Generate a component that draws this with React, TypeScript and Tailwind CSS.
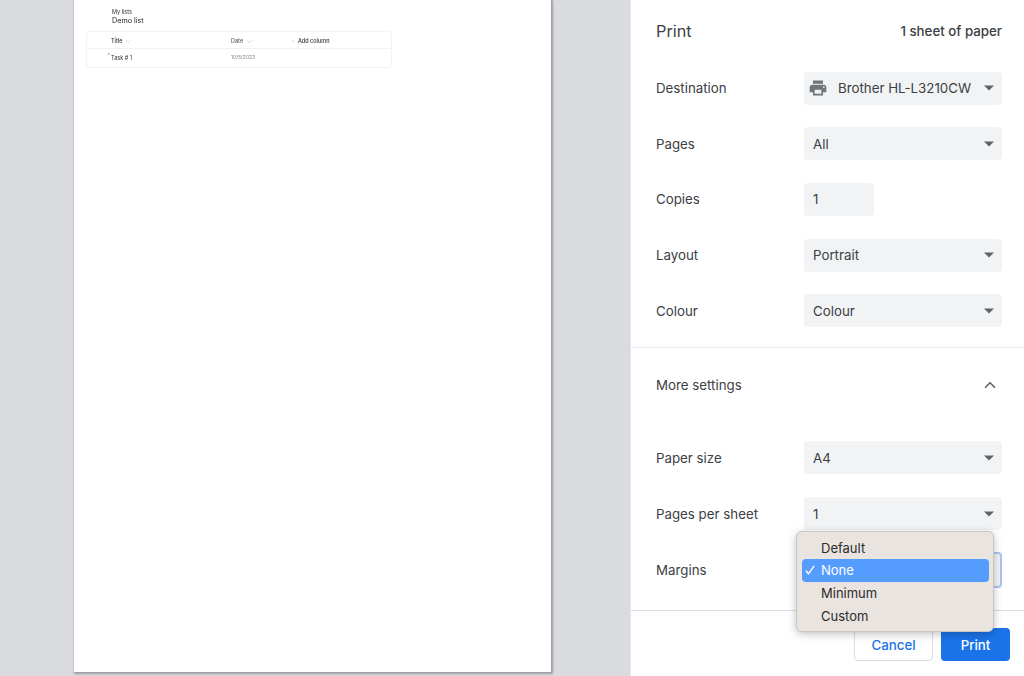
import { ChevronDown, ChevronUp, Plus } from 'lucide-react';

const FONT = "font-['Inter','Liberation_Sans',sans-serif]";

function Caret() {
  return (
    <svg width="10" height="6" viewBox="0 0 10 6" className="shrink-0">
      <path d="M0 0.5h10L5 5.5z" fill="#5f6368" />
    </svg>
  );
}

function PrinterIcon() {
  return (
    <svg width="20" height="20" viewBox="0 0 24 24" className="shrink-0" fill="#70757a">
      <path d="M19 8H5c-1.66 0-3 1.34-3 3v6h4v4h12v-4h4v-6c0-1.66-1.34-3-3-3zm-3 11H8v-5h8v5zm3-7c-.55 0-1-.45-1-1s.45-1 1-1 1 .45 1 1-.45 1-1 1zm-1-9H6v4h12V3z" />
    </svg>
  );
}

function Row({ label, children }: { label: string; children?: React.ReactNode }) {
  return (
    <div className="flex items-center h-[33px] pl-[25px] pr-[22px]">
      <span className="w-[148px] shrink-0 pt-[1.5px] text-[13.3px] text-[#3c4043]">{label}</span>
      {children}
    </div>
  );
}

function Select({ value, icon }: { value?: string; icon?: boolean }) {
  return (
    <div className={`flex items-center w-[198px] h-[33px] rounded-[4px] bg-[#f1f3f4] pr-[8px] text-[13.3px] text-[#3c4043] ${icon ? 'pl-[4px]' : 'pl-[9px]'}`}>
      {icon && <span className="mr-[10px] flex"><PrinterIcon /></span>}
      <span className="flex-1 whitespace-nowrap overflow-hidden pt-[1.5px]">{value}</span>
      <Caret />
    </div>
  );
}

function Sheet() {
  return (
    <div className="ml-[74px] w-[477px] h-[672px] bg-white shadow-[1px_1px_2px_1px_rgba(0,0,0,0.28)]">
      <div className="blur-[0.3px]">
        <div className="pl-[38px] pt-[9px]">
          <div className="text-[5.5px] leading-[6px] text-[#323130]">My lists</div>
          <div className="mt-[1px] text-[7.2px] leading-[10px] text-[#201f1e]">Demo list</div>
        </div>
        <div className="ml-[13px] mt-[6px] w-[304px] h-[35px] rounded-[2px] bg-white shadow-[0_0_2px_rgba(0,0,0,0.18)] text-[5.5px]">
          <div className="flex items-center h-[17px] pt-[2px] border-b border-[#f3f2f1] font-medium text-[#323130]">
            <span className="flex items-center w-[144px] pl-[24px] gap-[2px]">
              Title <ChevronDown size={9} strokeWidth={0.8} color="#8a8886" />
            </span>
            <span className="flex items-center w-[60px] gap-[2px] text-[#605e5c]">
              Date <ChevronDown size={9} strokeWidth={0.8} color="#8a8886" />
            </span>
            <span className="flex items-center gap-[3px]">
              <Plus size={4} strokeWidth={1} color="#8a8886" /> Add column
            </span>
          </div>
          <div className="flex items-center h-[17px] pt-[1px] text-[#323130]">
            <span className="relative w-[144px] pl-[24px]">
              <span className="absolute left-[20px] top-[-2px] text-[4px] text-[#8a8886]">↗</span>
              Task # 1
            </span>
            <span className="text-[#8a8886] text-[5px]">10/5/2023</span>
          </div>
        </div>
      </div>
    </div>
  );
}

function MarginsMenu() {
  const items = ['Default', 'None', 'Minimum', 'Custom'];
  return (
    <div className="absolute left-[165px] top-[531px] w-[198px] h-[101px] rounded-[6px] border border-[#c9c5c1] bg-[#e9e4e0] pl-[5px] pr-[4px] pt-[4px] shadow-[0_2px_8px_rgba(0,0,0,0.25)]">
      {items.map((item) =>
        item === 'None' ? (
          <div key={item} className="relative flex items-center h-[22.8px] rounded-[4px] bg-[#559cff] pl-[19px] pt-[1px] text-[13px] text-white">
            <svg width="10" height="10" viewBox="0 0 10 10" className="absolute left-[3px] top-[6.5px]">
              <path d="M0.8 5.6L3.4 8.8L9.2 0.8" fill="none" stroke="#fff" strokeWidth="1.4" />
            </svg>
            {item}
          </div>
        ) : (
          <div key={item} className="flex items-center h-[22.8px] pl-[19px] pt-[2px] text-[13px] text-[#2d2b29]">
            {item}
          </div>
        ),
      )}
    </div>
  );
}

export default function App() {
  return (
    <div className={`flex w-[1024px] h-[676px] overflow-hidden bg-[#dadbdf] ${FONT}`}>
      <div className="w-[630px] shrink-0">
        <Sheet />
      </div>

      {/* Settings panel */}
      <div className="relative flex flex-col w-[394px] h-full bg-white border-l border-[#e6e7ec]">
        <div className="flex items-center justify-between h-[33px] mt-[15px] pl-[25px] pr-[22px]">
          <span className="text-[16.3px] text-[#3c4043]">Print</span>
          <span className="text-[13.3px] font-medium text-[#3c4043]">1 sheet of paper</span>
        </div>

        <div className="flex flex-col gap-[22.65px] mt-[23.7px]">
          <Row label="Destination"><Select value="Brother HL-L3210CW" icon /></Row>
          <Row label="Pages"><Select value="All" /></Row>
          <Row label="Copies">
            <div className="flex items-center w-[70px] h-[33px] rounded-[4px] bg-[#f1f3f4] pl-[9px] pt-[1.5px] text-[13.3px] text-[#3c4043]">1</div>
          </Row>
          <Row label="Layout"><Select value="Portrait" /></Row>
          <Row label="Colour"><Select value="Colour" /></Row>
        </div>

        <div className="mt-[19.7px] border-t border-[#e8eaed]" />

        <div className="flex items-center justify-between h-[33px] mt-[21px] pl-[25px] pr-[25px] text-[13.3px] text-[#3c4043]">
          <span className="pt-[2px]">More settings</span>
          <ChevronUp size={18} strokeWidth={2.2} color="#5f6368" />
        </div>

        <div className="flex flex-col gap-[23px] mt-[39.4px]">
          <Row label="Paper size"><Select value="A4" /></Row>
          <Row label="Pages per sheet"><Select value="1" /></Row>
          <Row label="Margins">
            <div className="w-[200px] h-[36px] rounded-[4px] bg-[#f1f3f4] border-2 border-[#a9c5f2]" />
          </Row>
        </div>

        <div className="mt-[23.6px] flex-1 border-t border-[#dcdde0]">
          <div className="flex justify-end gap-[8px] pt-[17px] pr-[14px]">
            <button className="w-[79px] h-[33px] rounded-[4px] border border-[#dadce0] bg-white pt-[3px] text-[13.3px] font-medium text-[#1a73e8]">Cancel</button>
            <button className="w-[69px] h-[33px] rounded-[4px] bg-[#1a73e8] pt-[3px] text-[13.3px] font-medium text-white">Print</button>
          </div>
        </div>

        <MarginsMenu />
      </div>
    </div>
  );
}
